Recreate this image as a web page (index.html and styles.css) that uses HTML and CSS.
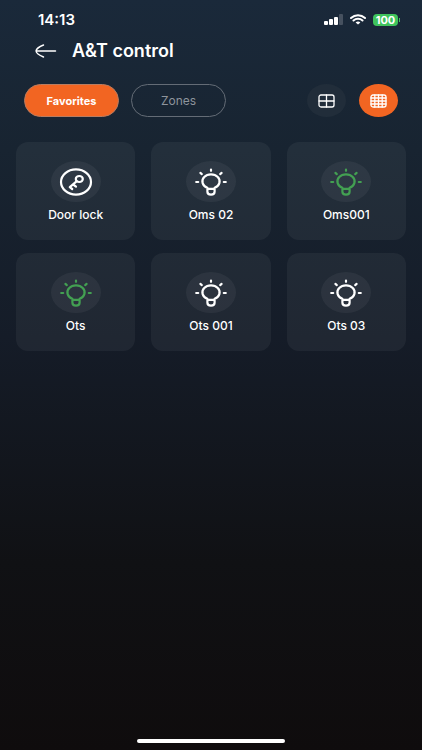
FILE: index.html
```html
<!DOCTYPE html>
<html lang="en">
<head>
    <meta charset="UTF-8">
    <meta name="viewport" content="width=device-width, initial-scale=1.0">
    <title>A&amp;T control</title>
    <link rel="stylesheet" href="styles.css">
</head>
<body>
    <!-- shared icons -->
    <svg class="sprite" aria-hidden="true">
        <symbol id="bulb" viewBox="0 0 34 28">
            <path d="M13.4 20.8 V19.8 A8.6 7 0 1 1 20.6 19.8 V20.8 Z M13.4 21 V23.8 C13.4 25.8 14.8 26.6 17 26.6 S20.6 25.8 20.6 23.8 V21" />
            <path d="M17 1.6 V2.8 M6.4 4.9 L7.8 6.1 M27.6 4.9 L26.2 6.1 M2.2 14 H4.2 M29.8 14 H31.8" />
        </symbol>
        <symbol id="key" viewBox="0 0 34 28">
            <ellipse cx="17" cy="14" rx="15" ry="12.6" />
            <ellipse cx="20.3" cy="11" rx="3.5" ry="3" />
            <path d="M17.8 13.2 L10.8 19.2 L13.2 21 M14.2 16.5 L17 18.6" />
        </symbol>
    </svg>

    <div class="app">
        <div class="status-bar">
            <span class="time">14:13</span>
            <div class="status-icons">
                <svg class="signal" viewBox="0 0 19 11">
                    <rect x="0" y="7" width="4" height="4" rx="1" />
                    <rect x="5" y="5" width="4" height="6" rx="1" />
                    <rect x="10" y="3" width="4" height="8" rx="1" />
                    <rect class="off" x="15" y="0" width="4" height="11" rx="1" />
                </svg>
                <svg class="wifi" viewBox="0 0 16 11">
                    <path d="M1 4 C5 0.2 11 0.2 15 4 M3.5 6.5 C6 4.2 10 4.2 12.5 6.5" />
                    <path class="dot" d="M5.6 8.4 C7 7.2 9 7.2 10.4 8.4 L8 10.6 Z" />
                </svg>
                <span class="battery">100</span>
            </div>
        </div>

        <header class="title-bar">
            <button class="back" aria-label="Back">
                <svg viewBox="0 0 22 14">
                    <path d="M20.5 7 H1 M8.5 1 C5 2.4 1.4 4.6 1 7 C1.4 9.4 5 11.6 8.5 13" />
                </svg>
            </button>
            <h1>A&amp;T control</h1>
        </header>

        <div class="toolbar">
            <button class="tab active">Favorites</button>
            <button class="tab">Zones</button>
            <div class="views">
                <button class="view" aria-label="Large grid">
                    <svg viewBox="0 0 18 14">
                        <rect x="1" y="1" width="15" height="12" rx="2" />
                        <path d="M8.5 1 V13 M1 7 H16" />
                    </svg>
                </button>
                <button class="view active" aria-label="Small grid">
                    <svg viewBox="0 0 18 14">
                        <rect x="1" y="1" width="15" height="12" rx="2" />
                        <path d="M4.8 1 V13 M8.5 1 V13 M12.2 1 V13 M1 4 H16 M1 7 H16 M1 10 H16" />
                    </svg>
                </button>
            </div>
        </div>

        <main class="devices">
            <button class="device">
                <span class="device-icon"><svg><use href="#key" /></svg></span>
                <span class="device-name">Door lock</span>
            </button>
            <button class="device">
                <span class="device-icon"><svg><use href="#bulb" /></svg></span>
                <span class="device-name">Oms 02</span>
            </button>
            <button class="device on">
                <span class="device-icon"><svg><use href="#bulb" /></svg></span>
                <span class="device-name">Oms001</span>
            </button>
            <button class="device on">
                <span class="device-icon"><svg><use href="#bulb" /></svg></span>
                <span class="device-name">Ots</span>
            </button>
            <button class="device">
                <span class="device-icon"><svg><use href="#bulb" /></svg></span>
                <span class="device-name">Ots 001</span>
            </button>
            <button class="device">
                <span class="device-icon"><svg><use href="#bulb" /></svg></span>
                <span class="device-name">Ots 03</span>
            </button>
        </main>

        <div class="home-indicator"></div>
    </div>
</body>
</html>
```
FILE: styles.css
```css
* {
    box-sizing: border-box;
}

body {
    margin: 0;
    font-family: Inter, "Liberation Sans", sans-serif;
    color: #fff;
    background: #0f0c0d;
}

button {
    padding: 0;
    border: none;
    background: none;
    font-family: inherit;
    color: inherit;
    cursor: pointer;
}

svg {
    display: block;
    fill: none;
    stroke: currentColor;
    stroke-linecap: round;
    stroke-linejoin: round;
}

.sprite {
    display: none;
}

.app {
    min-height: 100vh;
    padding: 10px 16px 7px;
    display: flex;
    flex-direction: column;
    background: linear-gradient(#1a293a, #182431 20%, #151c28 45%, #101114 75%, #0f0c0d);
}

/* Status bar */
.status-bar {
    display: flex;
    justify-content: space-between;
    align-items: center;
    height: 19px;
    padding: 0 8px 0 22px;
}

.time {
    font-size: 15px;
    font-weight: 600;
}

.status-icons {
    display: flex;
    align-items: center;
    gap: 7px;
}

.status-icons svg {
    height: 11px;
}

.signal {
    width: 19px;
    fill: #fff;
    stroke: none;
}

.signal .off {
    fill: #46515f;
}

.wifi {
    width: 16px;
    stroke-width: 2;
}

.wifi .dot {
    fill: #fff;
    stroke: none;
}

.battery {
    position: relative;
    width: 25px;
    border-radius: 4px;
    background: #3fc45c;
    font-size: 11px;
    font-weight: 700;
    line-height: 12px;
    text-align: center;
}

.battery::after {
    content: "";
    position: absolute;
    top: 4px;
    right: -2px;
    width: 1px;
    height: 4px;
    background: #3fc45c;
}

/* Title */
.title-bar {
    display: flex;
    align-items: center;
    gap: 15px;
    height: 24px;
    margin-top: 10px;
    padding-left: 19px;
}

.back svg {
    width: 22px;
    height: 14px;
    stroke-width: 1.5;
}

h1 {
    margin: 0;
    font-size: 18px;
    font-weight: 600;
    line-height: 24px;
}

/* Tabs and view switch */
.toolbar {
    display: flex;
    gap: 12px;
    margin-top: 21px;
    padding: 0 8px;
}

.tab {
    width: 95px;
    height: 33px;
    border: 1px solid #646c76;
    border-radius: 17px;
    font-size: 12px;
    color: #8e949c;
}

.tab.active {
    border-color: #b97c60;
    background: #f26522;
    font-size: 11px;
    font-weight: 700;
    color: #fff;
}

.views {
    display: flex;
    gap: 13px;
    margin-left: auto;
}

.view {
    width: 39px;
    height: 33px;
    border-radius: 50%;
    background: #212d3a;
}

.view.active {
    background: #f26522;
}

.view svg {
    width: 18px;
    height: 14px;
    margin: 0 auto;
    stroke-width: 1.3;
}

/* Device cards */
.devices {
    display: grid;
    grid-template-columns: repeat(3, 1fr);
    gap: 13px 16px;
    margin-top: 25px;
}

.device {
    display: flex;
    flex-direction: column;
    align-items: center;
    gap: 4px;
    height: 98px;
    padding-top: 19px;
    border-radius: 12px;
    background: rgba(255, 255, 255, 0.05);
}

.device-icon {
    display: flex;
    justify-content: center;
    align-items: center;
    width: 50px;
    height: 41px;
    border-radius: 50%;
    background: rgba(255, 255, 255, 0.05);
}

.device-icon svg {
    width: 34px;
    height: 28px;
    stroke-width: 2.2;
}

.device.on .device-icon {
    color: #43a052;
}

.device-name {
    font-size: 12px;
    font-weight: 500;
    line-height: 17px;
}

.home-indicator {
    width: 38%;
    height: 4px;
    margin: auto auto 0;
    border-radius: 2px;
    background: #fff;
}
```
